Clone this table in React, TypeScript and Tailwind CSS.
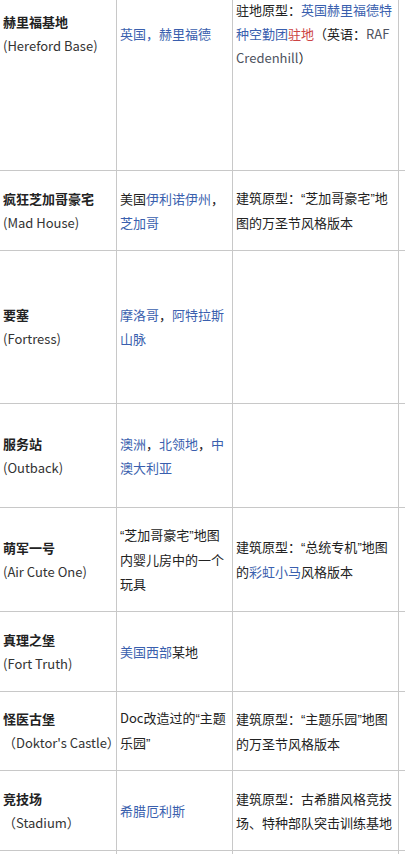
import React from 'react';

const L: React.FC<{ children: React.ReactNode }> = ({ children }) => (
  <span className="text-[#3a5fae]">{children}</span>
);

const R: React.FC<{ children: React.ReactNode }> = ({ children }) => (
  <span className="text-[#cc4444]">{children}</span>
);

// narrow curly quotes, as the source page renders them
const Q: React.FC<{ children: React.ReactNode }> = ({ children }) => (
  <span className="font-['Liberation_Sans',sans-serif]">{children}</span>
);

type Row = {
  h: string;
  name: string;
  en: string;
  place: React.ReactNode;
  proto: React.ReactNode;
};

const rows: Row[] = [
  {
    h: 'h-[274px]',
    name: '赫里福基地',
    en: '(Hereford Base)',
    place: <L>英国，赫里福德</L>,
    proto: (
      <>
        驻地原型：<L>英国赫里福德特种空勤团</L>
        <R>驻地</R>（英语：<span className="text-[#4e5360]">RAF Credenhill</span>）
      </>
    ),
  },
  {
    h: 'h-[80px]',
    name: '疯狂芝加哥豪宅',
    en: '(Mad House)',
    place: (
      <>
        美国<L>伊利诺伊州</L>，<L>芝加哥</L>
      </>
    ),
    proto: (
      <>
        建筑原型：<Q>“</Q>芝加哥豪宅<Q>”</Q>地图的万圣节风格版本
      </>
    ),
  },
  {
    h: 'h-[153px]',
    name: '要塞',
    en: '(Fortress)',
    place: (
      <>
        <L>摩洛哥</L>，<L>阿特拉斯山脉</L>
      </>
    ),
    proto: null,
  },
  {
    h: 'h-[104px]',
    name: '服务站',
    en: '(Outback)',
    place: (
      <>
        <L>澳洲</L>，<L>北领地</L>，<L>中澳大利亚</L>
      </>
    ),
    proto: null,
  },
  {
    h: 'h-[104px]',
    name: '萌军一号',
    en: '(Air Cute One)',
    place: (
      <>
        <Q>“</Q>芝加哥豪宅<Q>”</Q>地图内婴儿房中的一个玩具
      </>
    ),
    proto: (
      <>
        建筑原型：<Q>“</Q>总统专机<Q>”</Q>地图的<L>彩虹小马</L>风格版本
      </>
    ),
  },
  {
    h: 'h-[80px]',
    name: '真理之堡',
    en: '(Fort Truth)',
    place: (
      <>
        <L>美国西部</L>某地
      </>
    ),
    proto: null,
  },
  {
    h: 'h-[79px]',
    name: '怪医古堡',
    en: "（Doktor's Castle）",
    place: (
      <>
        Doc改造过的<Q>“</Q>主题乐园<Q>”</Q>
      </>
    ),
    proto: (
      <>
        建筑原型：<Q>“</Q>主题乐园<Q>”</Q>地图的万圣节风格版本
      </>
    ),
  },
  {
    h: 'h-[80px]',
    name: '竞技场',
    en: '（Stadium）',
    place: <L>希腊厄利斯</L>,
    proto: '建筑原型：古希腊风格竞技场、特种部队突击训练基地',
  },
  {
    h: 'h-[80px]',
    name: '',
    en: '',
    place: null,
    proto: null,
  },
];

const cell = 'border border-[#c8c8c8] px-[3px] align-middle';

const App: React.FC = () => {
  return (
    <div className="w-[405px] h-[854px] overflow-hidden bg-white font-['Noto_Sans_CJK_SC',sans-serif] text-[13px] leading-[24px] text-[#222]">
      <table className="mt-[-104px] ml-[-1px] border-collapse table-fixed w-[520px]">
        <colgroup>
          <col className="w-[117px]" />
          <col className="w-[116px]" />
          <col className="w-[166px]" />
          <col className="w-[121px]" />
        </colgroup>
        <tbody>
          {rows.map((r, i) => (
            <tr key={i} className={r.h}>
              <td className={cell}>
                <div className="font-bold text-[#222]">{r.name}</div>
                <div className="whitespace-nowrap text-[#333]">{r.en}</div>
              </td>
              <td className={cell}>{r.place}</td>
              <td className={cell}>{r.proto}</td>
              <td className={cell}></td>
            </tr>
          ))}
        </tbody>
      </table>
    </div>
  );
};

export default App;
